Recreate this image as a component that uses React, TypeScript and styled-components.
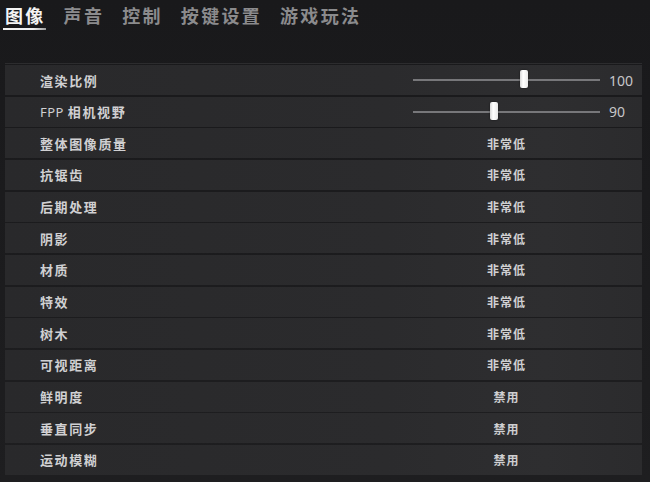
import styled, { createGlobalStyle } from "styled-components";

const GlobalStyle = createGlobalStyle`
  html, body {
    margin: 0;
    padding: 0;
    background: #19191b;
  }
  * {
    box-sizing: border-box;
  }
`;

const Screen = styled.div`
  width: 650px;
  height: 482px;
  overflow: hidden;
  background: linear-gradient(180deg, #19191b 0%, #1c1c1e 60%, #1e1e20 100%);
  font-family: "Noto Sans CJK SC", "Noto Sans", sans-serif;
  display: flex;
  flex-direction: column;
`;

const TabBar = styled.nav`
  display: flex;
  gap: 18px;
  padding: 1px 0 0 5px;
  height: 63px;
`;

const Tab = styled.div<{ active?: boolean }>`
  position: relative;
  height: 28px;
  font-size: 18px;
  font-weight: 700;
  letter-spacing: 2.3px;
  line-height: 28px;
  color: ${({ active }) => (active ? "#f4f4f4" : "#8b8b8d")};

  &::after {
    display: ${({ active }) => (active ? "block" : "none")};
    content: "";
    position: absolute;
    left: -2px;
    right: 0;
    bottom: -1px;
    height: 2px;
    background: linear-gradient(90deg, #f0f0f0 70%, #9a9a9a 100%);
  }
`;

const List = styled.div`
  display: flex;
  flex-direction: column;
  gap: 1.67px;
  margin: 0 8px 0 5px;
  padding-top: 1px;
  border-top: 1px solid #2c2c2e;
`;

const Row = styled.div`
  display: grid;
  grid-template-columns: 1fr 187px 42px;
  align-items: center;
  height: 30px;
  padding-left: 35px;
  background: linear-gradient(90deg, #29292b 0%, #2b2b2d 60%, #2e2e30 85%, #2b2b2d 100%);
`;

const Label = styled.div`
  font-size: 13px;
  font-weight: 700;
  letter-spacing: 1.6px;
  color: #d0d0d2;
`;

const Latin = styled.span`
  font-family: "Noto Sans", "Liberation Sans", sans-serif;
  font-weight: 400;
  letter-spacing: 0.5px;
`;

const Choice = styled.div`
  text-align: center;
  font-size: 12px;
  font-weight: 700;
  letter-spacing: 1px;
  color: #cfcfd1;
`;

const SliderTrack = styled.div`
  position: relative;
  height: 2px;
  background: #77777a;
`;

const SliderThumb = styled.div`
  position: absolute;
  top: -9px;
  width: 8px;
  height: 18px;
  margin-left: -4px;
  border-radius: 2px;
  background: linear-gradient(90deg, #d6d6d6 0%, #ffffff 40%, #e8e8e8 100%);
  box-shadow: 0 0 2px rgba(0, 0, 0, 0.6);
`;

const Number = styled.div`
  padding-left: 9px;
  font-family: "Noto Sans", "Liberation Sans", sans-serif;
  font-size: 14px;
  color: #c6c6c8;
`;

type Setting =
  | { label: string; prefix?: string; kind: "slider"; value: number; pos: number }
  | { label: string; prefix?: string; kind: "choice"; value: string };

const tabs = ["图像", "声音", "控制", "按键设置", "游戏玩法"];

const settings: Setting[] = [
  { label: "渲染比例", kind: "slider", value: 100, pos: 0.594 },
  { label: "相机视野", prefix: "FPP ", kind: "slider", value: 90, pos: 0.433 },
  { label: "整体图像质量", kind: "choice", value: "非常低" },
  { label: "抗锯齿", kind: "choice", value: "非常低" },
  { label: "后期处理", kind: "choice", value: "非常低" },
  { label: "阴影", kind: "choice", value: "非常低" },
  { label: "材质", kind: "choice", value: "非常低" },
  { label: "特效", kind: "choice", value: "非常低" },
  { label: "树木", kind: "choice", value: "非常低" },
  { label: "可视距离", kind: "choice", value: "非常低" },
  { label: "鲜明度", kind: "choice", value: "禁用" },
  { label: "垂直同步", kind: "choice", value: "禁用" },
  { label: "运动模糊", kind: "choice", value: "禁用" },
];

const App = () => {
  return (
    <>
      <GlobalStyle />
      <Screen>
        <TabBar>
          {tabs.map((t, i) => (
            <Tab key={t} active={i === 0}>
              {t}
            </Tab>
          ))}
        </TabBar>
        <List>
          {settings.map((s) => (
            <Row key={s.label}>
              <Label>
                {s.prefix && <Latin>{s.prefix}</Latin>}
                {s.label}
              </Label>
              {s.kind === "slider" ? (
                <>
                  <SliderTrack>
                    <SliderThumb style={{ left: `${s.pos * 100}%` }} />
                  </SliderTrack>
                  <Number>{s.value}</Number>
                </>
              ) : (
                <Choice>{s.value}</Choice>
              )}
            </Row>
          ))}
        </List>
      </Screen>
    </>
  );
};

export default App;
